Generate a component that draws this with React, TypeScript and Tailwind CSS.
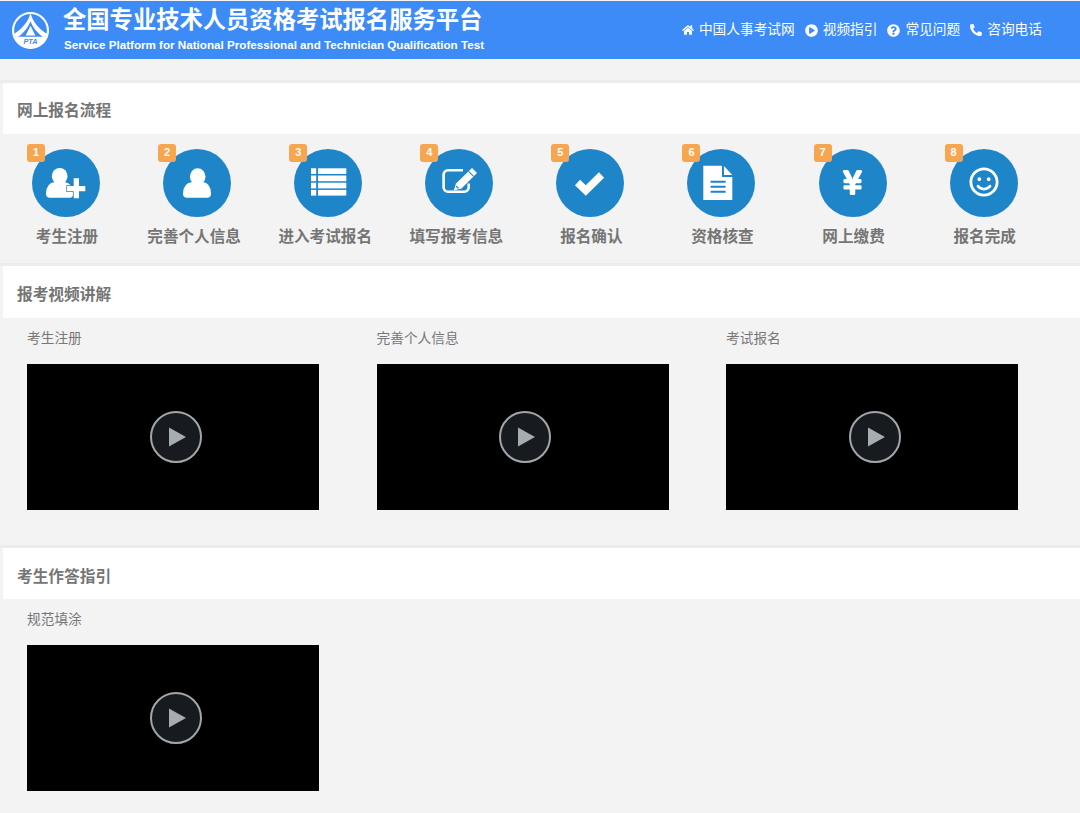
import type { ReactNode } from 'react'
import { FaHome, FaPhone, FaPlayCircle, FaQuestionCircle, FaRegSmile, FaYenSign } from 'react-icons/fa'

const BLUE = '#1e85c9'

function StepSvg({ children }: { children: ReactNode }) {
  return (
    <svg viewBox="0 0 68 68" className="h-[68px] w-[68px]" fill="#fff">
      {children}
    </svg>
  )
}

const userPlus = (
  <StepSvg>
    <ellipse cx="27.7" cy="27.3" rx="7.8" ry="8.4" />
    <path d="M18 48.7 H38 Q41 48.7 41 45 Q41 34 32.5 33 Q27.7 37.5 23 33 Q14 34 14 44.7 Q14 48.7 18 48.7Z" />
    <path
      d="M41.7 29.3 H47 V37 H53.3 V42.3 H47 V49.3 H41.7 V42.3 H35 V37 H41.7Z"
      stroke={BLUE}
      strokeWidth="1.4"
      paintOrder="stroke"
    />
  </StepSvg>
)

const user = (
  <StepSvg>
    <ellipse cx="34.7" cy="27.6" rx="7.8" ry="8.4" />
    <path d="M24 48.7 H44 Q48 48.7 48 44.7 Q48 34 39.5 33 Q34.7 37.5 29.5 33 Q20 34 20 44.7 Q20 48.7 24 48.7Z" />
  </StepSvg>
)

const tableList = (
  <StepSvg>
    {[19.3, 26.5, 33.7, 40.9].map((y) => (
      <g key={y}>
        <rect x="17" y={y} width="5.2" height="5.7" />
        <rect x="24" y={y} width="28.3" height="5.7" />
      </g>
    ))}
  </StepSvg>
)

const editSquare = (
  <StepSvg>
    <path
      d="M38 21.3 H23 a4.4 4.4 0 0 0 -4.4 4.4 V38.3 a4.4 4.4 0 0 0 4.4 4.4 H39.3 a4.4 4.4 0 0 0 4.4 -4.4 V34.5"
      fill="none"
      stroke="#fff"
      strokeWidth="2.6"
    />
    <path d="M47 19 L52 24 L36.5 39.5 L28.8 41.5 L31 34.5Z" />
    <path d="M43.6 22.4 L48.6 27.4 M31 37 L33.5 39.5" stroke={BLUE} strokeWidth="1.1" />
  </StepSvg>
)

const check = (
  <StepSvg>
    <path d="M21.5 33.5 L29.8 41.5 L45.5 26" fill="none" stroke="#fff" strokeWidth="7.4" />
  </StepSvg>
)

const fileText = (
  <StepSvg>
    <path d="M16.3 16.7 H35 V28 H45.3 V51 H16.3Z" />
    <path d="M37 17 L45.3 26 H37Z" />
    <path d="M23.6 32.7 H38.6 M23.6 37.7 H38.6 M23.6 42.7 H38.6" stroke={BLUE} strokeWidth="2" />
  </StepSvg>
)

const steps: { label: string; icon: ReactNode; wide?: boolean }[] = [
  { label: '考生注册', icon: userPlus },
  { label: '完善个人信息', icon: user, wide: true },
  { label: '进入考试报名', icon: tableList, wide: true },
  { label: '填写报考信息', icon: editSquare, wide: true },
  { label: '报名确认', icon: check },
  { label: '资格核查', icon: fileText },
  { label: '网上缴费', icon: <FaYenSign className="-mt-[2px] h-[27px] w-[21px] stroke-current stroke-[24]" /> },
  { label: '报名完成', icon: <FaRegSmile className="-mt-[2px] h-[30px] w-[30px]" /> },
]

const navLinks = [
  { label: '中国人事考试网', icon: <FaHome className="h-[12px] w-[12px]" /> },
  { label: '视频指引', icon: <FaPlayCircle className="h-[13px] w-[13px]" /> },
  { label: '常见问题', icon: <FaQuestionCircle className="h-[13px] w-[13px]" /> },
  { label: '咨询电话', icon: <FaPhone className="h-[12px] w-[12px] scale-x-[-1]" /> },
]

function Logo() {
  return (
    <svg viewBox="0 0 40 40" className="h-[39px] w-[39px] shrink-0">
      <circle cx="20" cy="20" r="19" fill="#fff" />
      <circle cx="20" cy="20" r="16.8" fill="#3d8bf6" />
      <path d="M20 1.5 C18 11 11 19 2 24 L6 27.5 C13 23 18 16 20 10.5 C22 16 27 23 34 27.5 L38 24 C29 19 22 11 20 1.5Z" fill="#fff" />
      <path d="M20 15 L25 25 H15Z" fill="#fff" />
      <path d="M3.8 26.5 H36.2 A17 17 0 0 1 3.8 26.5Z" fill="#fff" />
      <text x="20" y="33.5" textAnchor="middle" fontSize="7.5" fontStyle="italic" fontWeight="700" fill="#3d8bf6">
        PTA
      </text>
    </svg>
  )
}

function SectionTitle({ title, height, pad }: { title: string; height: string; pad: string }) {
  return (
    <div className={`ml-[3px] flex items-center bg-white pl-[14px] text-[15.7px] font-bold text-[#757575] ${height} ${pad}`}>
      {title}
    </div>
  )
}

function VideoCard({ title }: { title: string }) {
  return (
    <div className="w-[349.5px] shrink-0">
      <div className="flex h-[40px] items-center pt-[2px] text-[13.7px] leading-none text-[#777]">{title}</div>
      <div className="mt-[6px] flex h-[146px] w-[292px] items-center justify-center bg-black">
        <div className="ml-[5px] flex h-[52px] w-[52px] items-center justify-center rounded-full border-2 border-[#a3a6a8] bg-[#171b1f]">
          <svg viewBox="0 0 18 20" className="ml-[3px] h-[20px] w-[17px]">
            <path d="M0 0 L18 10 L0 20Z" fill="#a5adb2" />
          </svg>
        </div>
      </div>
    </div>
  )
}

export default function App() {
  return (
    <div
      className="h-[813px] w-[1080px] overflow-hidden bg-[#f3f3f3]"
      style={{ fontFamily: '"Liberation Sans", "Noto Sans CJK SC", sans-serif' }}
    >
      <header className="mt-px flex h-[58px] items-center justify-between bg-[#3d8bf6] pl-[11px] pr-[38px] text-white">
        <div className="flex items-center">
          <Logo />
          <div className="ml-[13px] -mt-[3px]">
            <div className="-mt-[1px] text-[23.3px] font-bold leading-[30px]">全国专业技术人员资格考试报名服务平台</div>
            <div className="ml-px mt-[3px] text-[11.65px] font-bold leading-[14px]">
              Service Platform for National Professional and Technician Qualification Test
            </div>
          </div>
        </div>
        <nav className="mt-[1px] flex items-center gap-[10px] text-[13.7px]">
          {navLinks.map((link) => (
            <a key={link.label} className="flex items-center gap-[5px]">
              {link.icon}
              <span>{link.label}</span>
            </a>
          ))}
        </nav>
      </header>

      <section className="mt-[21px] border-t-[3px] border-[#ececec]">
        <SectionTitle title="网上报名流程" height="h-[51px]" pad="pt-[4px]" />
        <div className="flex h-[129px] pl-[32px] pt-[15px]">
          {steps.map((step, i) => (
            <div key={step.label} className="w-[131.1px] shrink-0">
              <div className="relative flex h-[68px] w-[68px] items-center justify-center rounded-full bg-[#1e85c9] text-white">
                <span className="absolute -left-[5px] -top-[5px] flex h-[18px] w-[18px] items-center justify-center rounded-[3px] bg-[#f7a54f] pb-[2px] text-[11px] font-bold">
                  {i + 1}
                </span>
                {step.icon}
              </div>
              <div className="mt-[10px] flex w-[68px] justify-center">
                <span className={`whitespace-nowrap text-[15.6px] font-bold leading-[20px] text-[#757575] ${step.wide ? 'mr-[6px]' : 'ml-[2px]'}`}>
                  {step.label}
                </span>
              </div>
            </div>
          ))}
        </div>
      </section>

      <section className="border-t-[3px] border-[#ececec]">
        <SectionTitle title="报考视频讲解" height="h-[52px]" pad="pt-[6px]" />
        <div className="flex h-[227px] pl-[27px]">
          <VideoCard title="考生注册" />
          <VideoCard title="完善个人信息" />
          <VideoCard title="考试报名" />
        </div>
      </section>

      <section className="border-t-[3px] border-[#ececec]">
        <SectionTitle title="考生作答指引" height="h-[51px]" pad="pt-[6px]" />
        <div className="flex pl-[27px]">
          <VideoCard title="规范填涂" />
        </div>
      </section>
    </div>
  )
}
